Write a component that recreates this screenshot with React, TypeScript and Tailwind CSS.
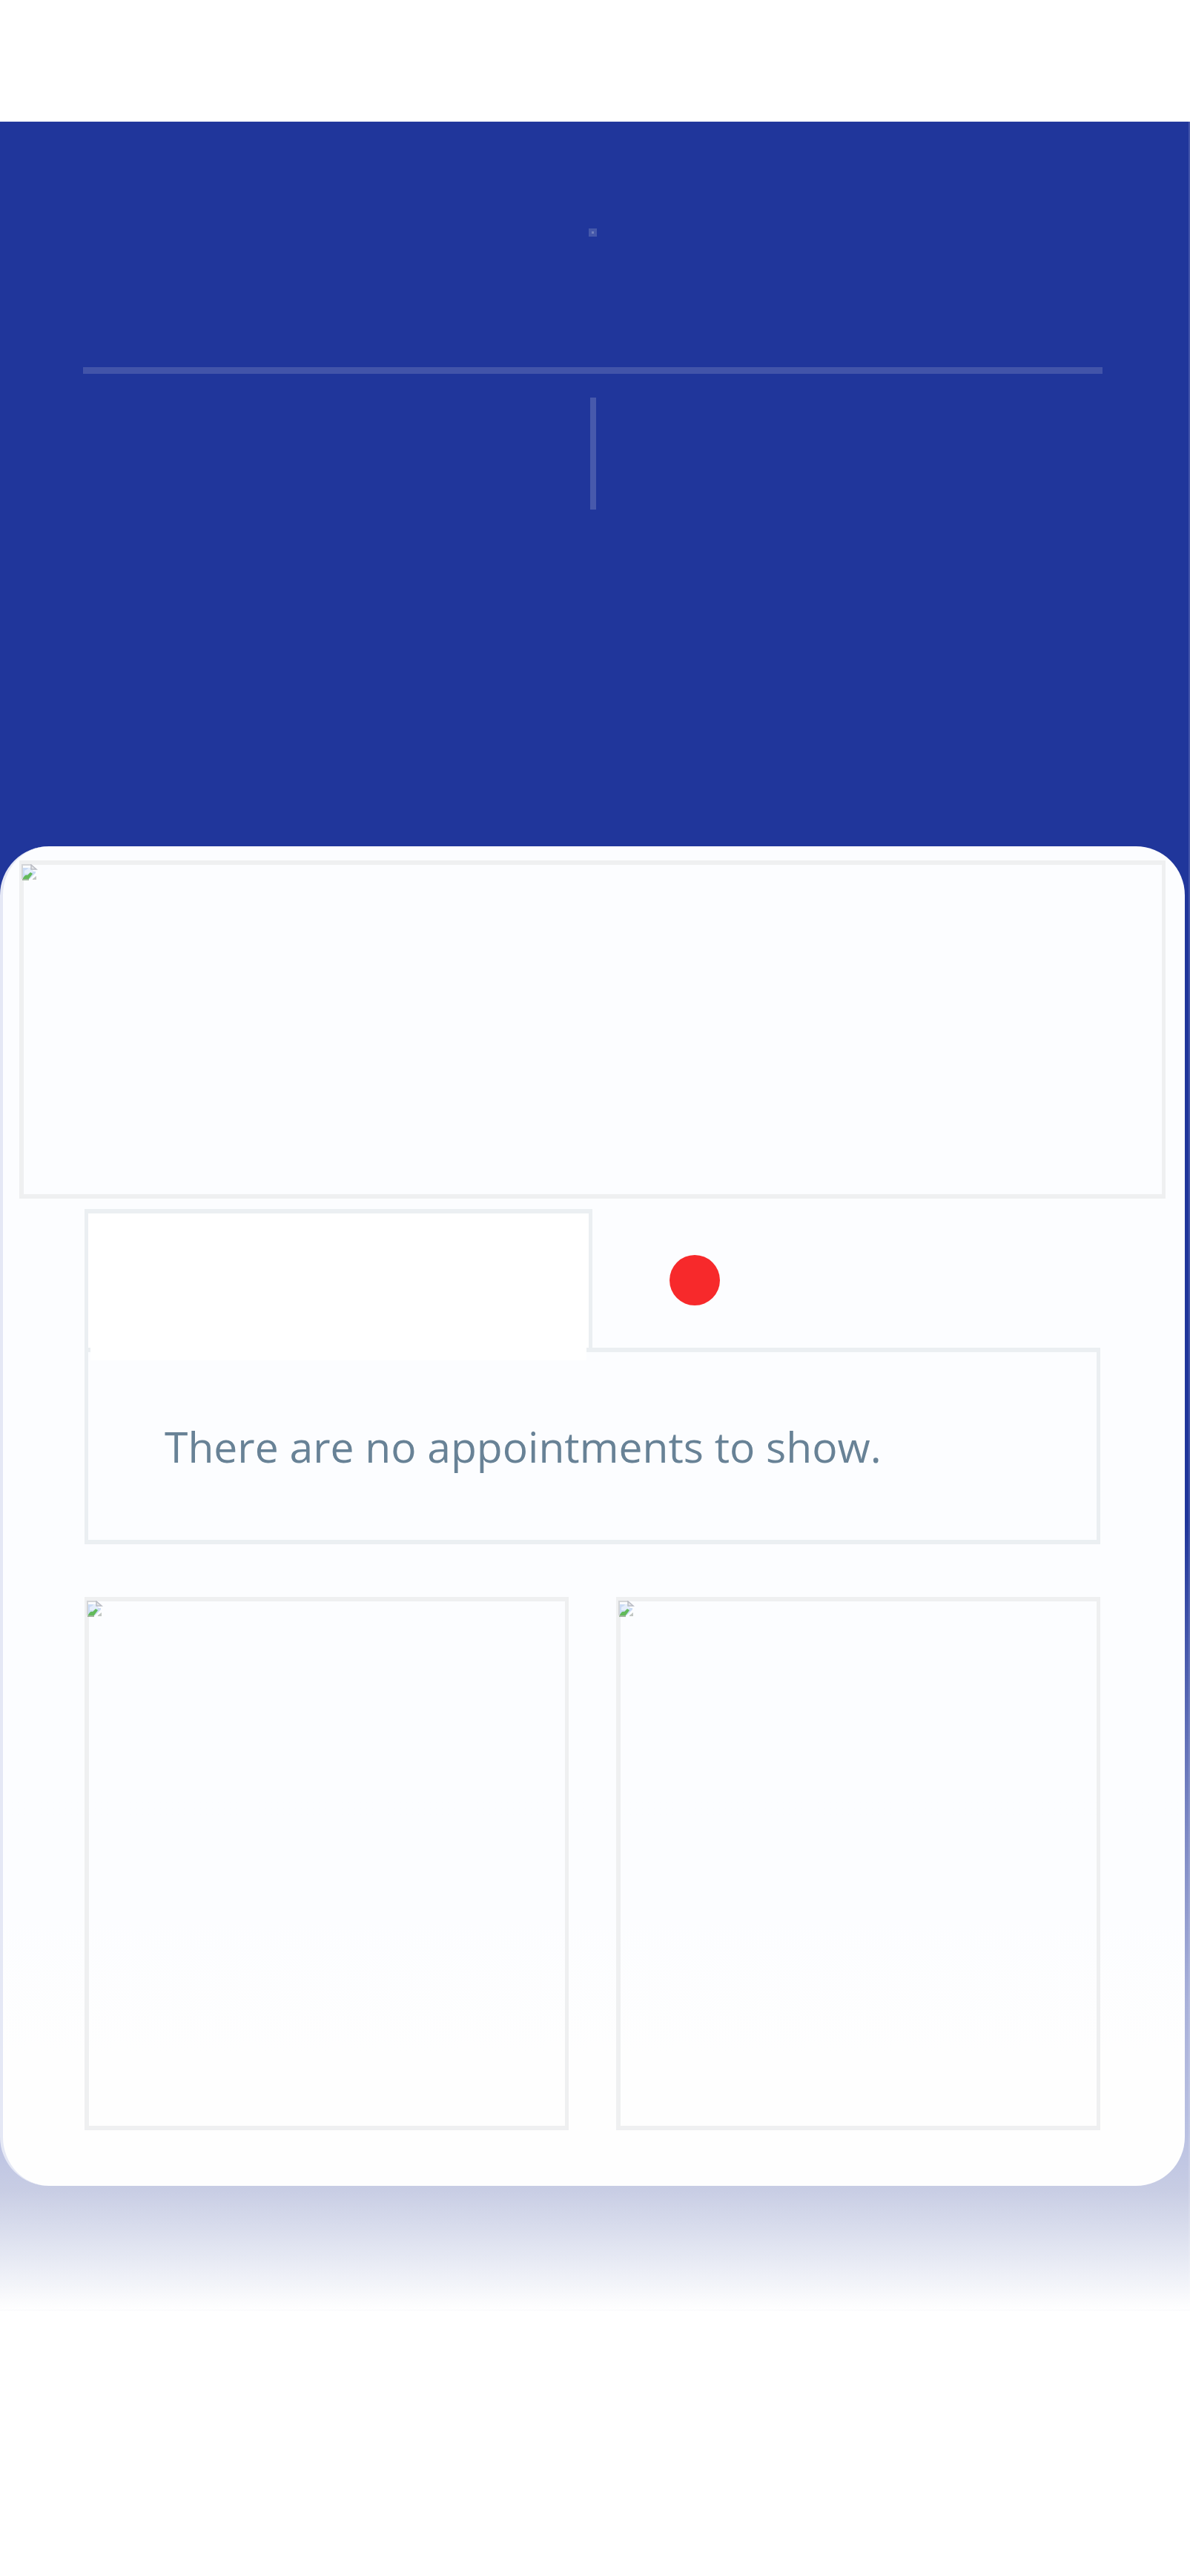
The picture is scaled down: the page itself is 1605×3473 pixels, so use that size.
import React from 'react';

function MissingImageIcon() {
  return (
    <svg viewBox="0 0 22 23" className="block h-[23px] w-[22px]" aria-hidden="true">
      <path d="M1 1H14L20 7V13L11 21H1Z" fill="#fbfcfe" />
      <path d="M2 5H12L16 10H19V12L11 20H2Z" fill="#cbdcf5" />
      <path d="M4 9C6 7 8 8 9 5C12 4 13 8 15 9V11L9 13H4Z" fill="#e5eefb" />
      <path d="M2 19C4 15 6 14 8 15L12 11L15 13L9 21H2Z" fill="#62ba5a" />
      <path d="M1 20V1H13" fill="none" stroke="#d3d5d8" strokeWidth="2" />
      <path d="M13 1V7H20Z" fill="#e3e4e8" stroke="#b9bcc4" strokeWidth="1.5" />
      <path d="M1 21H10" fill="none" stroke="#a2b79f" strokeWidth="2" />
      <path d="M15 20L20 16V21H15Z" fill="#c2c7c3" />
    </svg>
  );
}

function ImageFrame({ className }: { className: string }) {
  return (
    <div role="img" aria-label="Image unavailable" className={`border-[6px] border-r-[5px] border-[#eff0f1] ${className}`}>
      <div className="-ml-[3px] -mt-px">
        <MissingImageIcon />
      </div>
    </div>
  );
}

export default function App() {
  return (
    <div className="min-h-screen bg-white pt-[164px] font-['Open_Sans',sans-serif]">
      <div className="border-r-2 border-white/15 bg-[linear-gradient(to_bottom,#20369b_0%,#20369b_64%,#7c88c4_78%,#a9b1da_86%,#bac1e2_92%,#c8cde4_94.5%,#e5e8f3_97.5%,#ffffff_100%)] pb-[168px]">
        <header className="flex h-[977px] flex-col items-center pl-[112px] pr-[116px] pt-36">
          <div className="size-[11px] bg-[#4558aa] p-1">
            <div className="size-[3px] bg-[#7180bd]" />
          </div>
          <hr className="mt-[176px] h-[9px] w-full border-0 bg-[#4254a9]" />
          <div className="mt-8 h-[151px] w-2 bg-[#4759ac]" />
        </header>

        <main className="mr-[5px] rounded-[66px] border-l-4 border-[#e5e8f5] bg-linear-to-b from-[#fcfdff] from-80% to-[#fefefe] to-90% pb-[75px] pt-[19px]">
          <ImageFrame className="ml-[22px] mr-[26px] h-[456px]" />

          <div className="ml-[110px] mr-[114px] mt-[14px]">
            <div role="tablist" className="grid h-[187px] grid-cols-2">
              <button
                role="tab"
                aria-selected="true"
                aria-label="Appointments"
                className="relative border-x-[5px] border-t-[6px] border-[#ebeff2] bg-white"
              >
                <span className="absolute -bottom-[17px] left-[3px] right-[3px] h-[17px] bg-white" />
              </button>
              <button role="tab" aria-selected="false" aria-label="Alerts" className="flex items-center pl-[104px] pt-1">
                <span className="size-[68px] rounded-full bg-[#f7292b]" />
              </button>
            </div>
            <section role="tabpanel" className="border-[6px] border-x-[5px] border-[#ebeff2] px-[103px] pb-[86px] pt-[87px]">
              <p className="text-[57px] leading-[80px] text-[#688296]">There are no appointments to show.</p>
            </section>

            <div className="mt-[71px] grid grid-cols-2 gap-16">
              <ImageFrame className="h-[719px]" />
              <ImageFrame className="h-[719px]" />
            </div>
          </div>
        </main>
      </div>
    </div>
  );
}
